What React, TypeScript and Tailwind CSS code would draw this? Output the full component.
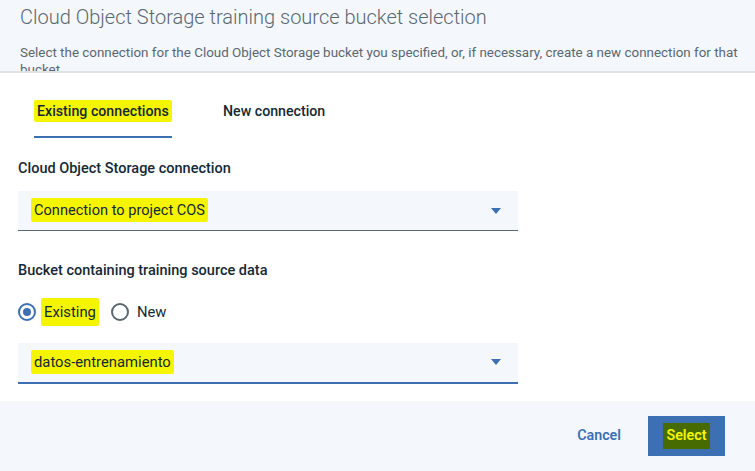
import React, { useState } from 'react';

const Caret = () => (
	<svg width="10" height="6" viewBox="0 0 10 6" className="shrink-0">
		<path d="M0 0h10L5 6z" fill="#3d70b2" />
	</svg>
);

// yellow highlighter marks drawn over the screenshot
const Hl = ({ children }: { children: React.ReactNode }) => (
	<span className="bg-[#f5f500] px-[3px] py-[3px] -mx-[3px] rounded-[2px]">{children}</span>
);

const App = () => {
	const [tab, setTab] = useState('existing');
	const [bucketMode, setBucketMode] = useState('existing');

	return (
		<div className="w-[755px] h-[471px] flex flex-col bg-white text-[#152935] font-['Roboto','Liberation_Sans',sans-serif] overflow-hidden">
			{/* header */}
			<div className="h-[73px] shrink-0 bg-[#f4f7fb] border-b-2 border-[#dfe3e6] overflow-hidden pl-5 pr-[2px] pt-[5px]">
				<h2 className="text-[20px] font-light text-[#5a6872] leading-[24px]">
					Cloud Object Storage training source bucket selection
				</h2>
				<p className="mt-[15px] text-[13.4px] leading-[17px] text-[#5a6872]">
					Select the connection for the Cloud Object Storage bucket you specified, or, if necessary, create a new connection for that bucket.
				</p>
			</div>

			{/* body */}
			<div className="flex-1 px-[18px]">
				<div className="flex pl-4 mt-[28px]">
					<button
						type="button"
						onClick={() => setTab('existing')}
						className={`w-[138px] pb-[14px] border-b-2 text-left pl-[3px] text-[14.2px] font-medium ${tab === 'existing' ? 'border-[#3d70b2]' : 'border-transparent'}`}
					>
						<Hl>Existing connections</Hl>
					</button>
					<button
						type="button"
						onClick={() => setTab('new')}
						className={`ml-[51px] pb-[14px] border-b-2 text-[14.2px] font-medium ${tab === 'new' ? 'border-[#3d70b2]' : 'border-transparent'}`}
					>
						New connection
					</button>
				</div>

				<div className="mt-[20px] text-[14.5px] font-medium">Cloud Object Storage connection</div>
				<div className="mt-[11px] w-[500px] h-[40px] bg-[#f4f7fb] border-b border-[#5a6872] flex items-center justify-between pl-4 pr-[17px] text-[14.6px]">
					<span><Hl>Connection to project COS</Hl></span>
					<Caret />
				</div>

				<div className="mt-[29px] text-[14.5px] font-medium">Bucket containing training source data</div>
				<div className="mt-[16px] flex items-center text-[14.8px]">
					<button type="button" onClick={() => setBucketMode('existing')} className="flex items-center gap-2">
						<span className={`w-[18px] h-[18px] rounded-full border-2 flex items-center justify-center ${bucketMode === 'existing' ? 'border-[#3d70b2]' : 'border-[#5a6872]'}`}>
							{bucketMode === 'existing' && <span className="w-2 h-2 rounded-full bg-[#3d70b2]" />}
						</span>
						<Hl>Existing</Hl>
					</button>
					<button type="button" onClick={() => setBucketMode('new')} className="flex items-center gap-2 ml-[15px]">
						<span className={`w-[18px] h-[18px] rounded-full border-2 flex items-center justify-center ${bucketMode === 'new' ? 'border-[#3d70b2]' : 'border-[#5a6872]'}`}>
							{bucketMode === 'new' && <span className="w-2 h-2 rounded-full bg-[#3d70b2]" />}
						</span>
						New
					</button>
				</div>
				<div className="mt-[17px] w-[500px] h-[41px] bg-[#f4f7fb] border-b-2 border-[#3d70b2] flex items-center justify-between pl-4 pr-[17px] text-[14.8px]">
					<span><Hl>datos-entrenamiento</Hl></span>
					<Caret />
				</div>
			</div>

			{/* footer */}
			<div className="h-[70px] shrink-0 bg-[#f4f7fb] flex items-center justify-end pr-[30px]">
				<button type="button" className="text-[14.3px] font-semibold text-[#3d70b2] mr-[27px]">
					Cancel
				</button>
				<button type="button" className="w-[77px] h-[40px] bg-[#3d70b2] text-[14.3px] font-semibold flex items-center justify-center">
					<span className="bg-[#476b00] text-[#f5f500] px-[3px] py-[2px]">Select</span>
				</button>
			</div>
		</div>
	);
};

export default App;
